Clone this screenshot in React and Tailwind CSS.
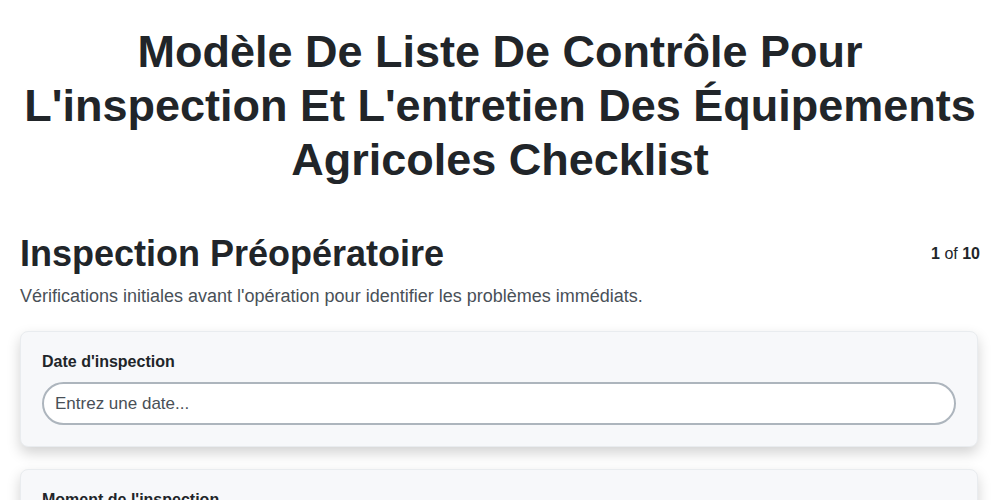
import React from 'react';

const fields = [
  { label: "Date d'inspection", placeholder: 'Entrez une date...' },
  { label: "Moment de l'inspection", placeholder: 'Entrez une heure...' },
];

const App = () => {
  return (
    <div className="min-h-screen bg-white px-5 pt-[25px] text-[#212529]" style={{ fontFamily: '"Liberation Sans", Arial, sans-serif' }}>
      <h1 className="text-center text-[45px] font-bold leading-[54px]">
        Modèle De Liste De Contrôle Pour L'inspection Et L'entretien Des Équipements Agricoles Checklist
      </h1>

      <div className="mt-[45px] flex items-center justify-between">
        <h2 className="text-[36px] font-bold leading-[43px]">Inspection Préopératoire</h2>
        <div className="text-[16px]">
          <span className="font-bold">1</span> of <span className="font-bold">10</span>
        </div>
      </div>
      <p className="mt-[8px] text-[18px] leading-[27px] text-[#495057]">
        Vérifications initiales avant l'opération pour identifier les problèmes immédiats.
      </p>

      <div className="mt-[21px] flex flex-col gap-[22px] pb-6 pr-[2px]">
        {fields.map((field) => (
          <div
            key={field.label}
            className="rounded-lg border border-[#e9ecef] bg-[#f7f8fa] px-[21px] pb-[21px] pt-[19px] shadow-[0_6px_14px_rgba(0,0,0,0.18)]"
          >
            <label className="block text-[16px] font-bold leading-[21px]">{field.label}</label>
            <input
              className="mt-[10px] h-[43px] w-full rounded-full border-2 border-[#adb5bd] bg-white px-[11px] text-[17px] text-[#212529] placeholder:text-[#495057] outline-none"
              placeholder={field.placeholder}
            />
          </div>
        ))}
      </div>
    </div>
  );
};

export default App;
